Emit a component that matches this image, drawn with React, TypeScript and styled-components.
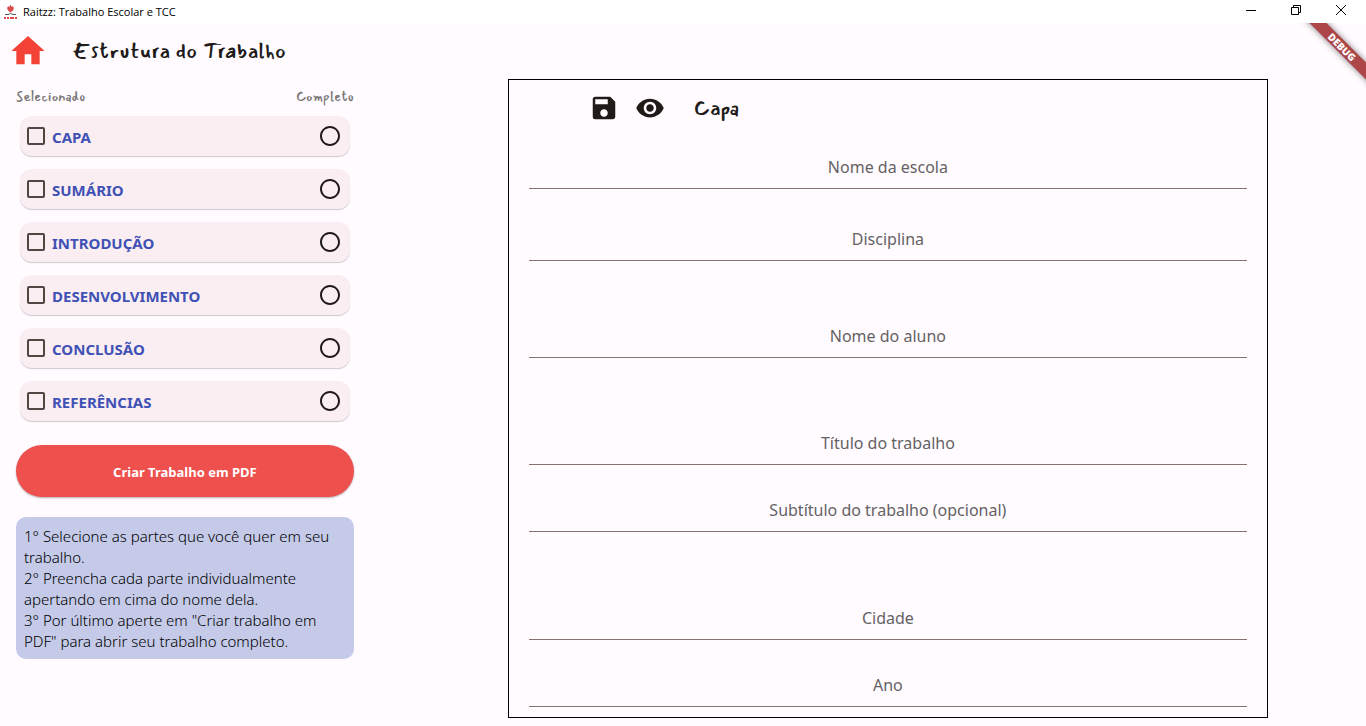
import React from "react";
import styled, { createGlobalStyle } from "styled-components";
import { MdHome, MdSave, MdRemoveRedEye, MdRadioButtonUnchecked } from "react-icons/md";

const uiFont = `"Segoe UI", "Noto Sans", "Open Sans", sans-serif`;
const titleFont = `"Mansalva", "Lato", sans-serif`;

const GlobalStyle = createGlobalStyle`
  *, *::before, *::after { box-sizing: border-box; }
  body { margin: 0; background: #fffbff; color: #201a19; font-family: ${uiFont}; }
  button, input { font: inherit; color: inherit; }
  button { border: 0; padding: 0; background: none; cursor: pointer; }
`;

const Window = styled.div`
  min-height: 100vh;
  display: flex;
  flex-direction: column;
`;

const TitleBar = styled.header`
  height: 23px;
  display: flex;
  align-items: center;
  gap: 6px;
  padding: 0 3px 0 4px;
  background: #fff;
  color: #000;
  font-family: "Segoe UI", "Open Sans", sans-serif;
  font-size: 11px;
  line-height: 16px;
`;

const WindowControls = styled.div`
  margin-left: auto;
  align-self: flex-start;
  display: flex;
`;

const WindowButton = styled.button`
  width: 45px;
  height: 20px;
  display: grid;
  place-items: center;
`;

const Content = styled.div`
  position: relative;
  flex: 1;
`;

const AppBar = styled.div`
  height: 56px;
  display: flex;
  align-items: center;
  padding-left: 8px;
  gap: 24px;
`;

const HomeButton = styled.button`
  display: flex;
  color: #f44336;
`;

const PageTitle = styled.h1`
  margin: 0;
  font-family: ${titleFont};
  font-size: 22px;
  line-height: 28px;
  font-weight: 400;
`;

const DebugCorner = styled.div`
  position: absolute;
  top: 0;
  right: 0;
  width: 72px;
  height: 72px;
  overflow: hidden;
  pointer-events: none;
`;

const DebugBanner = styled.div`
  position: absolute;
  top: 18px;
  right: -26px;
  width: 100px;
  height: 12px;
  transform: rotate(45deg);
  background: #ac4648;
  box-shadow: 0 0 6px rgba(0, 0, 0, 0.5);
  color: #fff;
  font-size: 10px;
  line-height: 12px;
  font-weight: 900;
  text-align: center;
`;

const Columns = styled.main`
  display: flex;
  align-items: flex-start;
`;

const Sidebar = styled.section`
  width: 30%;
  padding: 8px 56px 8px 16px;
`;

const ListHeader = styled.div`
  display: flex;
  justify-content: space-between;
  font-family: ${titleFont};
  font-size: 14px;
  line-height: 20px;
  color: #7c7979;
`;

const PartList = styled.ul`
  list-style: none;
  margin: 0;
  padding: 9px 4px 24px;
  display: flex;
  flex-direction: column;
  gap: 13px;
`;

const PartRow = styled.li`
  height: 40px;
  display: flex;
  align-items: center;
  gap: 7px;
  padding: 0 8px 0 7px;
  border-radius: 12px;
  background: #fbeef2;
  box-shadow: 0 1px 1px rgba(0, 0, 0, 0.2);
`;

const CheckBox = styled.input`
  appearance: none;
  flex: none;
  width: 18px;
  height: 18px;
  margin: 0;
  border: 2px solid #534341;
  border-radius: 2px;
  &:checked { background: #534341; }
`;

const PartName = styled.button`
  flex: 1;
  padding-top: 2px;
  text-align: left;
  color: #3f51b5;
  font-size: 15px;
  line-height: 20px;
  font-weight: 700;
`;

const CreateButton = styled.button`
  width: 100%;
  height: 52px;
  padding-top: 2px;
  border-radius: 26px;
  background: #ee504d;
  color: #fff;
  font-size: 13px;
  font-weight: 700;
  box-shadow: 0 1px 2px rgba(0, 0, 0, 0.3);
`;

const Instructions = styled.div`
  margin-top: 20px;
  padding: 9px 8px 7px;
  border-radius: 10px;
  background: #c5cae9;
  color: #000;
  font-size: 15px;
  line-height: 21px;
  font-weight: 300;
  p { margin: 0; }
`;

const FormColumn = styled.section`
  width: 70%;
  display: flex;
  justify-content: center;
  padding-bottom: 8px;
`;

const FormCard = styled.form`
  flex: 0 1 760px;
  padding: 0 20px 10px;
  border: 1px solid #000;
`;

const FormHeader = styled.div`
  height: 56px;
  margin-bottom: 5px;
  padding-left: 60px;
  display: flex;
  align-items: center;
  gap: 16px;
`;

const IconButton = styled.button`
  display: flex;
`;

const FormTitle = styled.h2`
  margin: 0 0 0 13px;
  font-family: ${titleFont};
  font-size: 22px;
  line-height: 28px;
  font-weight: 400;
`;

const Field = styled.input<{ $gap: number }>`
  display: block;
  width: 100%;
  height: 48px;
  margin-top: ${({ $gap }) => $gap}px;
  padding: 4px 0 0;
  border: 0;
  border-bottom: 1px solid #857371;
  border-radius: 0;
  background: transparent;
  text-align: center;
  font-size: 16px;
  outline: none;
  &::placeholder { color: #656264; opacity: 1; }
`;

const parts = ["CAPA", "SUMÁRIO", "INTRODUÇÃO", "DESENVOLVIMENTO", "CONCLUSÃO", "REFERÊNCIAS"];

const fields = [
  { label: "Nome da escola", gap: 0 },
  { label: "Disciplina", gap: 24 },
  { label: "Nome do aluno", gap: 49 },
  { label: "Título do trabalho", gap: 59 },
  { label: "Subtítulo do trabalho (opcional)", gap: 19 },
  { label: "Cidade", gap: 60 },
  { label: "Ano", gap: 19 },
];

const Logo = () => (
  <svg width="13" height="14" viewBox="0 0 13 14" aria-hidden="true">
    <path d="M6 0h1v1.500h2l1 1.500-1 2.500L6.500 7.500 4 5.500 3 3l1-1.500h2z" fill="#dc4b4b" />
    <path d="M1 9.500h3l2.500-1 2.500 1h3" fill="none" stroke="#555" />
    <path d="M0 12h2v2H0zM3 12h2v2H3zM6 12h4v2H6zM11 12h2v2h-2z" fill="#dc4b4b" />
  </svg>
);

export default function App() {
  return (
    <Window>
      <GlobalStyle />
      <TitleBar>
        <Logo />
        <span>Raitzz: Trabalho Escolar e TCC</span>
        <WindowControls>
          <WindowButton aria-label="Minimizar">
            <svg width="10" height="10"><path d="M0 5.500h10" stroke="#000" /></svg>
          </WindowButton>
          <WindowButton aria-label="Restaurar">
            <svg width="10" height="10" fill="none" stroke="#000">
              <path d="M0.500 2.500h7v7h-7zM2.500 2.500v-2h7v7h-2" />
            </svg>
          </WindowButton>
          <WindowButton aria-label="Fechar">
            <svg width="10" height="10"><path d="M0 0l10 10M10 0L0 10" stroke="#000" /></svg>
          </WindowButton>
        </WindowControls>
      </TitleBar>
      <Content>
        <AppBar>
          <HomeButton aria-label="Início"><MdHome size={40} /></HomeButton>
          <PageTitle>Estrutura do Trabalho</PageTitle>
        </AppBar>
        <DebugCorner><DebugBanner>DEBUG</DebugBanner></DebugCorner>
        <Columns>
          <Sidebar>
            <ListHeader>
              <span>Selecionado</span>
              <span>Completo</span>
            </ListHeader>
            <PartList>
              {parts.map((name) => (
                <PartRow key={name}>
                  <CheckBox type="checkbox" aria-label={name} />
                  <PartName>{name}</PartName>
                  <MdRadioButtonUnchecked size={24} aria-hidden="true" />
                </PartRow>
              ))}
            </PartList>
            <CreateButton>Criar Trabalho em PDF</CreateButton>
            <Instructions>
              <p>1° Selecione as partes que você quer em seu trabalho.</p>
              <p>2° Preencha cada parte individualmente apertando em cima do nome dela.</p>
              <p>3° Por último aperte em "Criar trabalho em PDF" para abrir seu trabalho completo.</p>
            </Instructions>
          </Sidebar>
          <FormColumn>
            <FormCard>
              <FormHeader>
                <IconButton type="button" aria-label="Salvar"><MdSave size={30} /></IconButton>
                <IconButton type="button" aria-label="Visualizar"><MdRemoveRedEye size={30} /></IconButton>
                <FormTitle>Capa</FormTitle>
              </FormHeader>
              {fields.map(({ label, gap }) => (
                <Field key={label} $gap={gap} aria-label={label} placeholder={label} />
              ))}
            </FormCard>
          </FormColumn>
        </Columns>
      </Content>
    </Window>
  );
}
